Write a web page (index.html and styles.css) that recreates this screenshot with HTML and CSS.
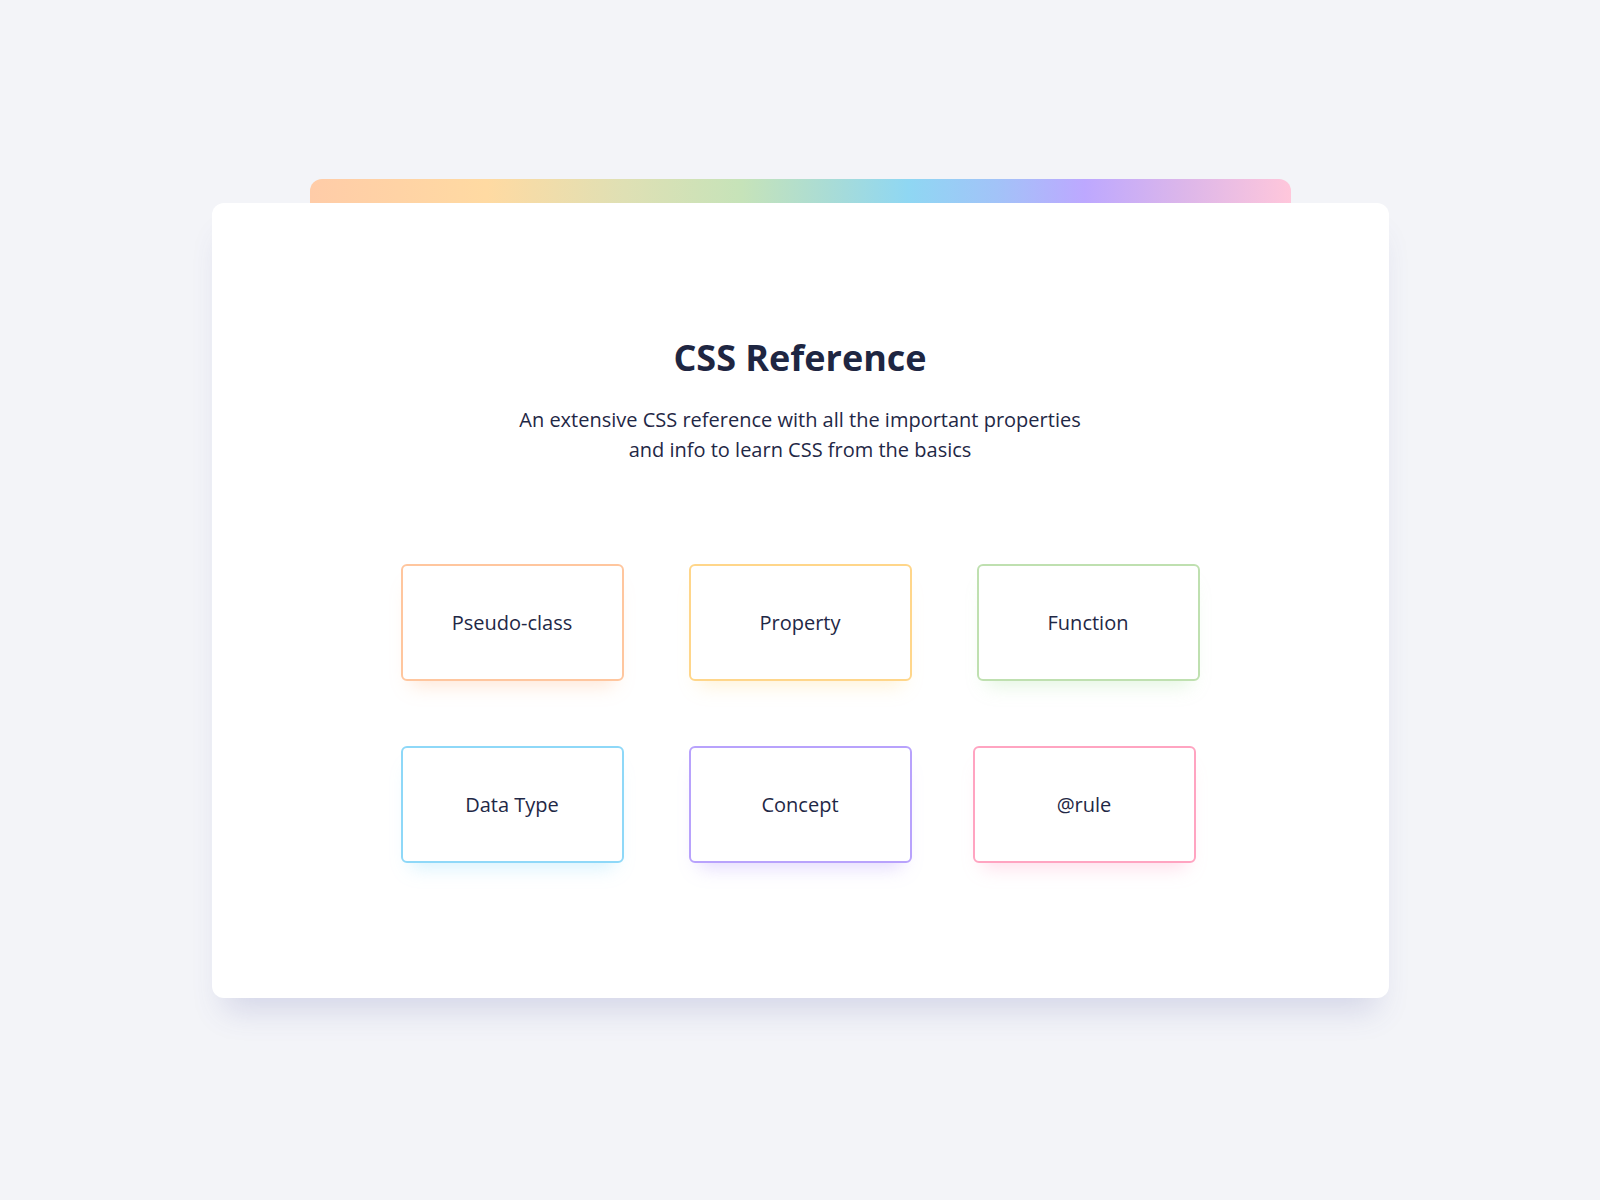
FILE: index.html
```html
<!DOCTYPE html>
<html lang="en">
<head>
<meta charset="utf-8">
<title>CSS Reference</title>
<link rel="stylesheet" href="styles.css">
</head>
<body>
<main class="page">
  <div class="stack">
    <div class="rainbow"></div>
    <section class="card">
      <h1 class="title">CSS Reference</h1>
      <p class="lead">An extensive CSS reference with all the important properties<br>and info to learn CSS from the basics</p>
      <div class="grid">
        <a class="tile tile--orange">Pseudo-class</a>
        <a class="tile tile--yellow">Property</a>
        <a class="tile tile--green">Function</a>
        <a class="tile tile--blue">Data Type</a>
        <a class="tile tile--purple">Concept</a>
        <a class="tile tile--pink tile--shift">@rule</a>
      </div>
    </section>
  </div>
</main>
</body>
</html>
```

FILE: styles.css
```css
* { box-sizing: border-box; }

html, body {
  margin: 0;
  padding: 0;
  background: #f3f4f8;
}

body {
  font-family: "Open Sans", "Noto Sans", "Liberation Sans", sans-serif;
  color: #1f2846;
  min-height: 1200px;
}

.page {
  padding-top: 179px;
}

.stack {
  width: 1177px;
  margin: 0 auto;
  display: flex;
  flex-direction: column;
  align-items: center;
}

.rainbow {
  width: 981px;
  height: 24px;
  border-radius: 12px 12px 0 0;
  background: linear-gradient(90deg,
    #ffcca8 0%,
    #ffdaa2 18%,
    #dfe0b4 32%,
    #c6e3b9 44%,
    #a9dcd6 53%,
    #8fd7f3 61%,
    #a2c3f8 70%,
    #bda8ff 79%,
    #dcb6ea 89%,
    #ffc7db 100%);
}

.card {
  width: 1177px;
  height: 795px;
  background: #ffffff;
  border-radius: 12px;
  padding-top: 132px;
  box-shadow: 0 24px 30px -12px rgba(70, 80, 160, 0.18);
  display: flex;
  flex-direction: column;
  align-items: center;
}

.title {
  margin: 0;
  font-size: 36px;
  line-height: 1.3;
  font-weight: 700;
  color: #1e2642;
  letter-spacing: 0;
}

.lead {
  margin: 23px 0 0;
  font-size: 20px;
  line-height: 30px;
  text-align: center;
  color: #1f2846;
}

.grid {
  margin-top: 99px;
  display: grid;
  grid-template-columns: repeat(3, 223px);
  column-gap: 65px;
  row-gap: 65px;
}

.tile {
  height: 117px;
  border: 2px solid;
  border-radius: 6px;
  background: #fff;
  display: flex;
  align-items: center;
  justify-content: center;
  font-size: 20px;
  color: #1f2846;
  text-decoration: none;
}

.tile--orange { border-color: #ffc69e; box-shadow: 0 14px 18px -10px rgba(255, 180, 130, 0.35); }
.tile--yellow { border-color: #ffd68a; box-shadow: 0 14px 18px -10px rgba(255, 214, 130, 0.35); }
.tile--green  { border-color: #bfe0b0; box-shadow: 0 14px 18px -10px rgba(170, 225, 160, 0.35); }
.tile--blue   { border-color: #8ed8f8; box-shadow: 0 14px 18px -10px rgba(130, 215, 250, 0.35); }
.tile--purple { border-color: #b8a2fc; box-shadow: 0 14px 18px -10px rgba(170, 140, 250, 0.35); }
.tile--pink   { border-color: #ffa4c1; box-shadow: 0 14px 18px -10px rgba(255, 150, 190, 0.35); }

.tile--shift { margin-left: -4px; margin-right: 4px; }
```
